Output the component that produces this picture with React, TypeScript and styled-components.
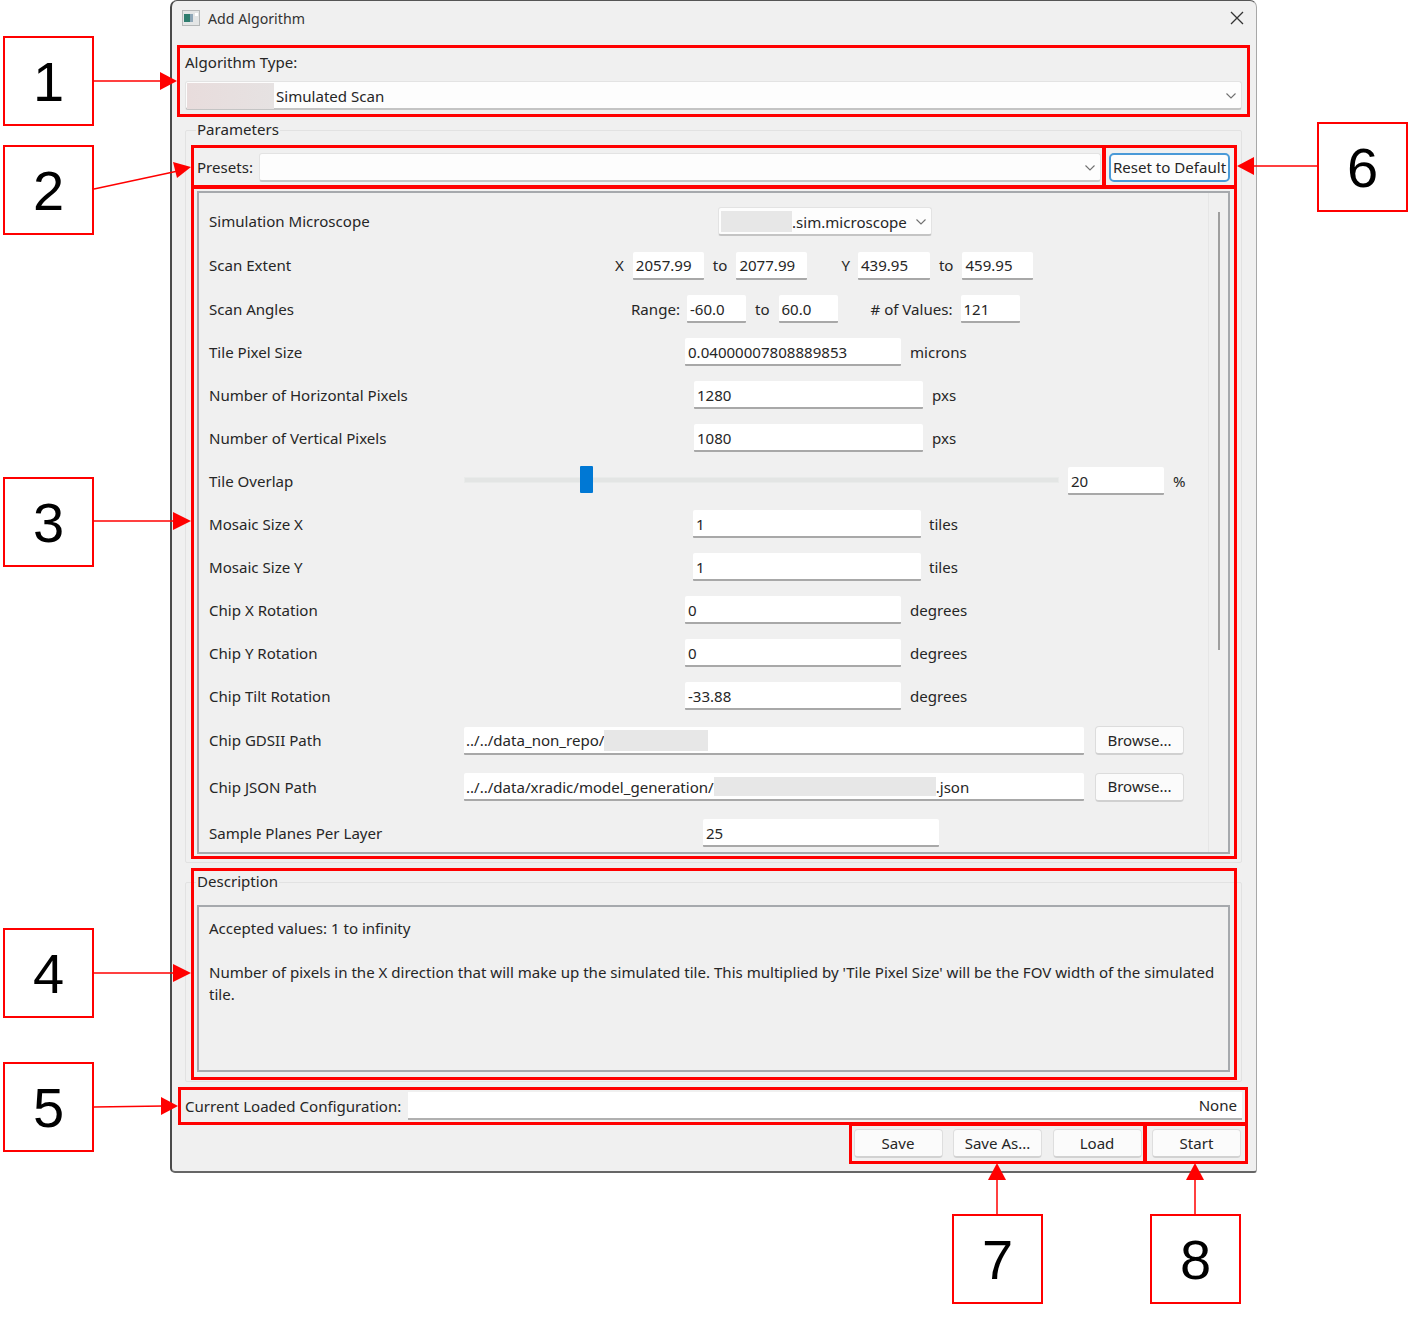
import React from 'react';
import styled, { createGlobalStyle } from 'styled-components';

const GlobalStyle = createGlobalStyle`
  html, body {
    margin: 0;
    background: #ffffff;
  }
  * {
    box-sizing: border-box;
  }
`;

const Canvas = styled.div`
  position: relative;
  width: 1411px;
  height: 1325px;
  background: #ffffff;
  overflow: hidden;
`;

const Dialog = styled.div`
  display: flex;
  flex-direction: column;
  width: 1087px;
  height: 1173px;
  margin-left: 170px;
  padding: 0 14px 0 13px;
  background: #f0f0f0;
  border-style: solid;
  border-width: 1px 1px 2px 2px;
  border-color: #555 #a8a8a8 #666 #4a4a4a;
  border-radius: 7px 7px 3px 5px;
  font-family: 'Noto Sans', 'Open Sans', sans-serif;
  font-size: 15.07px;
  color: #262626;
`;

const TitleBar = styled.div`
  display: flex;
  align-items: center;
  gap: 8px;
  flex: none;
  height: 35px;
  margin: 0 -14px 0 -13px;
  padding: 0 12px 1px 10px;
`;

const TitleText = styled.span`
  flex: 1;
  font-size: 14.2px;
  color: #333;
`;

const SectionLabel = styled.div`
  flex: none;
  height: 22px;
  margin-top: 15px;
  line-height: 22px;
`;

const ComboBox = styled.div<{ $w?: number; $ml?: number }>`
  display: flex;
  align-items: center;
  flex: ${p => (p.$w ? '0 0 auto' : '1')};
  width: ${p => (p.$w ? `${p.$w}px` : 'auto')};
  height: 29px;
  margin-left: ${p => p.$ml ?? 0}px;
  padding: 1px 5px 0 2px;
  background: #fdfdfd;
  border: 1px solid #e3e3e3;
  border-bottom: 2px solid #c4c4c4;
  border-radius: 3px;
  white-space: nowrap;
`;

const ComboValue = styled.span`
  flex: 1;
  display: flex;
  align-items: center;
  min-width: 0;
`;

const TypeCombo = styled(ComboBox)`
  flex: none;
  margin-top: 8px;
  padding-left: 1px;
`;

const Redacted = styled.span<{ $w: number; $h: number; $tint?: string; $mr?: number }>`
  display: inline-block;
  flex: none;
  width: ${p => p.$w}px;
  height: ${p => p.$h}px;
  margin-right: ${p => p.$mr ?? 0}px;
  background: ${p => p.$tint ?? '#e7e7e7'};
`;

const Group = styled.fieldset<{ $h: number; $mt: number }>`
  display: block;
  flex: none;
  min-width: 0;
  height: ${p => p.$h}px;
  margin: ${p => p.$mt}px 0 0;
  padding: 12px 11px 0;
  border: 1px solid #e2e2e2;
  border-radius: 2px;
`;

const GroupTitle = styled.legend`
  height: 22px;
  margin-left: -1px;
  padding: 0 1px;
  line-height: 20px;
`;

const PresetRow = styled.div`
  display: flex;
  align-items: center;
  height: 29px;
`;

const PresetLabel = styled.span`
  width: 62px;
  flex: none;
  margin-bottom: 1px;
`;

const ResetButton = styled.button`
  flex: none;
  width: 121px;
  height: 29px;
  margin-left: 8px;
  padding: 0 0 1px;
  background: #fdfdfd;
  border: 2px solid #4a9ad8;
  border-radius: 5px;
  font: inherit;
  color: inherit;
  white-space: nowrap;
`;

const ScrollArea = styled.div`
  display: flex;
  height: 663px;
  margin-top: 9px;
  border: 2px solid #a6a9ad;
  overflow: hidden;
`;

const FormBody = styled.div`
  flex: 1;
  padding-top: 7px;
`;

const ScrollTrack = styled.div`
  flex: none;
  display: flex;
  justify-content: center;
  width: 20px;
  border-left: 1px solid #e6e6e6;
`;

const ScrollThumb = styled.div`
  width: 2px;
  height: 438px;
  margin-top: 19px;
  background: #9f9f9f;
`;

const FormRow = styled.div<{ $h: number }>`
  display: flex;
  align-items: center;
  height: ${p => p.$h}px;
  padding: 0 0 1px 10px;
  white-space: nowrap;
`;

const RowLabel = styled.span`
  flex: none;
  width: 255px;
  margin-bottom: 1px;
`;

const Field = styled.div<{ $w: number; $ml?: number; $pl?: number }>`
  display: flex;
  align-items: center;
  flex: none;
  width: ${p => p.$w}px;
  height: 28px;
  margin-left: ${p => p.$ml ?? 0}px;
  padding: 1px 0 0 ${p => p.$pl ?? 3}px;
  background: #ffffff;
  border-bottom: 2px solid #a8a8a8;
  border-radius: 2px 2px 1px 1px;
`;

const Caption = styled.span<{ $ml?: number }>`
  flex: none;
  margin-bottom: 1px;
  margin-left: ${p => p.$ml ?? 0}px;
`;

const SliderTrack = styled.div`
  position: relative;
  flex: none;
  width: 595px;
  height: 6px;
  margin-bottom: 2px;
  background: #e3e5e4;
  border: 1px solid #e9ebea;
`;

const SliderHandle = styled.div<{ $left: number }>`
  position: absolute;
  left: ${p => p.$left}px;
  top: -12px;
  width: 13px;
  height: 27px;
  background: #0078d4;
  border-radius: 1px;
`;

const BrowseButton = styled.button`
  flex: none;
  width: 89px;
  height: 29px;
  margin-left: 11px;
  padding: 0 0 1px;
  background: #fbfbfb;
  border: 1px solid #dcdcdc;
  border-bottom: 2px solid #d0d0d0;
  border-radius: 4px;
  font: inherit;
  color: inherit;
`;

const DescriptionBox = styled.div`
  height: 167px;
  padding: 10px 11px 0 10px;
  border: 2px solid #a6a9ad;
  line-height: 22.5px;
`;

const DescriptionLine = styled.div<{ $mt?: number }>`
  margin-top: ${p => p.$mt ?? 0}px;
`;

const ConfigRow = styled.div`
  display: flex;
  align-items: center;
  flex: none;
  height: 29px;
  margin-top: 9px;
`;

const ConfigLabel = styled.span`
  flex: none;
  width: 223px;
  white-space: nowrap;
`;

const ConfigValue = styled.div`
  flex: 1;
  height: 28px;
  padding-right: 5px;
  background: #ffffff;
  border-bottom: 2px solid #b0b0b0;
  line-height: 27px;
  text-align: right;
`;

const ActionRow = styled.div`
  display: flex;
  flex: none;
  justify-content: flex-end;
  gap: 10.5px;
  margin-top: 9px;
  padding-right: 1px;
`;

const ActionButton = styled.button`
  width: 89px;
  height: 29px;
  padding: 0 0 1px;
  background: #fbfbfb;
  border: 1px solid #dedede;
  border-bottom: 2px solid #d2d2d2;
  border-radius: 4px;
  font: inherit;
  color: inherit;
`;

// annotation layer drawn on top of the screenshot
const Highlight = styled.div<{ $x: number; $y: number; $w: number; $h: number }>`
  position: absolute;
  left: ${p => p.$x}px;
  top: ${p => p.$y}px;
  width: ${p => p.$w}px;
  height: ${p => p.$h}px;
  border: 3px solid #ff0000;
  pointer-events: none;
`;

const Callout = styled.div<{ $x: number; $y: number }>`
  position: absolute;
  left: ${p => p.$x}px;
  top: ${p => p.$y}px;
  display: flex;
  align-items: center;
  justify-content: center;
  width: 91px;
  height: 90px;
  background: #ffffff;
  border: 2px solid #ff0000;
  font-family: 'Liberation Sans', Arial, sans-serif;
  font-size: 56px;
  color: #000000;
`;

const ArrowLayer = styled.svg`
  position: absolute;
  left: 0;
  top: 0;
  pointer-events: none;
`;

const Chevron = () => (
  <svg width="10" height="6" viewBox="0 0 10 6" fill="none">
    <path d="M0.5 0.5L5 5l4.5-4.5" stroke="#707070" strokeWidth="1.1" />
  </svg>
);

const AppIcon = () => (
  <svg width="18" height="16" viewBox="0 0 18 16">
    <rect x="0.5" y="0.5" width="17" height="15" fill="#e4e6e6" stroke="#b5b8b8" />
    <rect x="2" y="4" width="6" height="8" fill="#2e7d6e" />
    <rect x="8" y="4" width="3" height="8" fill="#8fa8b8" />
    <rect x="13" y="3" width="3" height="3" fill="#ffffff" />
  </svg>
);

const CloseIcon = () => (
  <svg width="14" height="14" viewBox="0 0 14 14" fill="none">
    <path d="M1 1l12 12M13 1L1 13" stroke="#333" strokeWidth="1.3" />
  </svg>
);

const highlights = [
  { x: 177, y: 45, w: 1073, h: 72 },
  { x: 191, y: 145, w: 914, h: 43 },
  { x: 1103, y: 145, w: 134, h: 43 },
  { x: 191, y: 186, w: 1046, h: 673 },
  { x: 191, y: 868, w: 1046, h: 212 },
  { x: 178, y: 1087, w: 1070, h: 38 },
  { x: 849, y: 1123, w: 297, h: 41 },
  { x: 1144, y: 1123, w: 104, h: 41 },
];

const callouts = [
  { n: 1, x: 3, y: 36 },
  { n: 2, x: 3, y: 145 },
  { n: 3, x: 3, y: 477 },
  { n: 4, x: 3, y: 928 },
  { n: 5, x: 3, y: 1062 },
  { n: 6, x: 1317, y: 122 },
  { n: 7, x: 952, y: 1214 },
  { n: 8, x: 1150, y: 1214 },
];

const simpleRows = [
  { label: 'Chip X Rotation', value: '0' },
  { label: 'Chip Y Rotation', value: '0' },
  { label: 'Chip Tilt Rotation', value: '-33.88' },
];

export default function App() {
  return (
    <Canvas>
      <GlobalStyle />
      <Dialog>
        <TitleBar>
          <AppIcon />
          <TitleText>Add Algorithm</TitleText>
          <CloseIcon />
        </TitleBar>

        <SectionLabel>Algorithm Type:</SectionLabel>
        <TypeCombo>
          <ComboValue>
            <Redacted $w={87} $h={26} $mr={2} $tint="linear-gradient(90deg, #e8dcdc, #e6e2e2)" />
            Simulated Scan
          </ComboValue>
          <Chevron />
        </TypeCombo>

        <Group $h={744} $mt={9}>
          <GroupTitle>Parameters</GroupTitle>
          <PresetRow>
            <PresetLabel>Presets:</PresetLabel>
            <ComboBox>
              <ComboValue />
              <Chevron />
            </ComboBox>
            <ResetButton>Reset to Default</ResetButton>
          </PresetRow>

          <ScrollArea>
            <FormBody>
              <FormRow $h={44}>
                <RowLabel>Simulation Microscope</RowLabel>
                <ComboBox $w={214} $ml={254}>
                  <ComboValue>
                    <Redacted $w={71} $h={21} />
                    .sim.microscope
                  </ComboValue>
                  <Chevron />
                </ComboBox>
              </FormRow>
              <FormRow $h={44}>
                <RowLabel>Scan Extent</RowLabel>
                <Caption $ml={151}>X</Caption>
                <Field $w={71} $ml={9}>2057.99</Field>
                <Caption $ml={9}>to</Caption>
                <Field $w={71} $ml={9}>2077.99</Field>
                <Caption $ml={34}>Y</Caption>
                <Field $w={72} $ml={8}>439.95</Field>
                <Caption $ml={9}>to</Caption>
                <Field $w={71} $ml={9}>459.95</Field>
              </FormRow>
              <FormRow $h={43}>
                <RowLabel>Scan Angles</RowLabel>
                <Caption $ml={167}>Range:</Caption>
                <Field $w={59} $ml={7}>-60.0</Field>
                <Caption $ml={9}>to</Caption>
                <Field $w={59} $ml={9}>60.0</Field>
                <Caption $ml={33}># of Values:</Caption>
                <Field $w={59} $ml={8}>121</Field>
              </FormRow>
              <FormRow $h={43}>
                <RowLabel>Tile Pixel Size</RowLabel>
                <Field $w={216} $ml={221}>0.04000007808889853</Field>
                <Caption $ml={9}>microns</Caption>
              </FormRow>
              <FormRow $h={43}>
                <RowLabel>Number of Horizontal Pixels</RowLabel>
                <Field $w={229} $ml={230}>1280</Field>
                <Caption $ml={9}>pxs</Caption>
              </FormRow>
              <FormRow $h={43}>
                <RowLabel>Number of Vertical Pixels</RowLabel>
                <Field $w={229} $ml={230}>1080</Field>
                <Caption $ml={9}>pxs</Caption>
              </FormRow>
              <FormRow $h={43}>
                <RowLabel>Tile Overlap</RowLabel>
                <SliderTrack>
                  <SliderHandle $left={115} />
                </SliderTrack>
                <Field $w={96} $ml={9}>20</Field>
                <Caption $ml={9}>%</Caption>
              </FormRow>
              <FormRow $h={43}>
                <RowLabel>Mosaic Size X</RowLabel>
                <Field $w={228} $ml={229}>1</Field>
                <Caption $ml={8}>tiles</Caption>
              </FormRow>
              <FormRow $h={43}>
                <RowLabel>Mosaic Size Y</RowLabel>
                <Field $w={228} $ml={229}>1</Field>
                <Caption $ml={8}>tiles</Caption>
              </FormRow>
              {simpleRows.map(row => (
                <FormRow key={row.label} $h={43}>
                  <RowLabel>{row.label}</RowLabel>
                  <Field $w={216} $ml={221}>{row.value}</Field>
                  <Caption $ml={9}>degrees</Caption>
                </FormRow>
              ))}
              <FormRow $h={46}>
                <RowLabel>Chip GDSII Path</RowLabel>
                <Field $w={620} $pl={2}>
                  ../../data_non_repo/
                  <Redacted $w={104} $h={21} />
                </Field>
                <BrowseButton>Browse...</BrowseButton>
              </FormRow>
              <FormRow $h={47}>
                <RowLabel>Chip JSON Path</RowLabel>
                <Field $w={620} $pl={2}>
                  ../../data/xradic/model_generation/
                  <Redacted $w={222} $h={19} />
                  .json
                </Field>
                <BrowseButton>Browse...</BrowseButton>
              </FormRow>
              <FormRow $h={45}>
                <RowLabel>Sample Planes Per Layer</RowLabel>
                <Field $w={236} $ml={239}>25</Field>
              </FormRow>
            </FormBody>
            <ScrollTrack>
              <ScrollThumb />
            </ScrollTrack>
          </ScrollArea>
        </Group>

        <Group $h={211} $mt={8}>
          <GroupTitle>Description</GroupTitle>
          <DescriptionBox>
            <DescriptionLine>Accepted values: 1 to infinity</DescriptionLine>
            <DescriptionLine $mt={21}>
              Number of pixels in the X direction that will make up the simulated tile. This multiplied by 'Tile Pixel
              Size' will be the FOV width of the simulated tile.
            </DescriptionLine>
          </DescriptionBox>
        </Group>

        <ConfigRow>
          <ConfigLabel>Current Loaded Configuration:</ConfigLabel>
          <ConfigValue>None</ConfigValue>
        </ConfigRow>

        <ActionRow>
          <ActionButton>Save</ActionButton>
          <ActionButton>Save As...</ActionButton>
          <ActionButton>Load</ActionButton>
          <ActionButton>Start</ActionButton>
        </ActionRow>
      </Dialog>

      {highlights.map(h => (
        <Highlight key={`${h.x}-${h.y}`} $x={h.x} $y={h.y} $w={h.w} $h={h.h} />
      ))}

      <ArrowLayer width="1411" height="1325" viewBox="0 0 1411 1325">
        <g stroke="#ff0000" strokeWidth="1.5">
          <path d="M94 81H162" />
          <path d="M94 189L178 171" />
          <path d="M94 521H175" />
          <path d="M94 973H175" />
          <path d="M94 1107L164 1106" />
          <path d="M1318 166H1252" />
          <path d="M997 1215V1178" />
          <path d="M1195 1215V1178" />
        </g>
        <g fill="#ff0000">
          <path d="M177 81L160 72V90Z" />
          <path d="M191 167L173 162L177 178Z" />
          <path d="M191 521L173 512V530Z" />
          <path d="M191 973L173 964V982Z" />
          <path d="M178 1106L161 1097V1115Z" />
          <path d="M1237 166L1254 157V175Z" />
          <path d="M997 1163L988 1180H1006Z" />
          <path d="M1195 1163L1186 1180H1204Z" />
        </g>
      </ArrowLayer>

      {callouts.map(c => (
        <Callout key={c.n} $x={c.x} $y={c.y}>
          {c.n}
        </Callout>
      ))}
    </Canvas>
  );
}
